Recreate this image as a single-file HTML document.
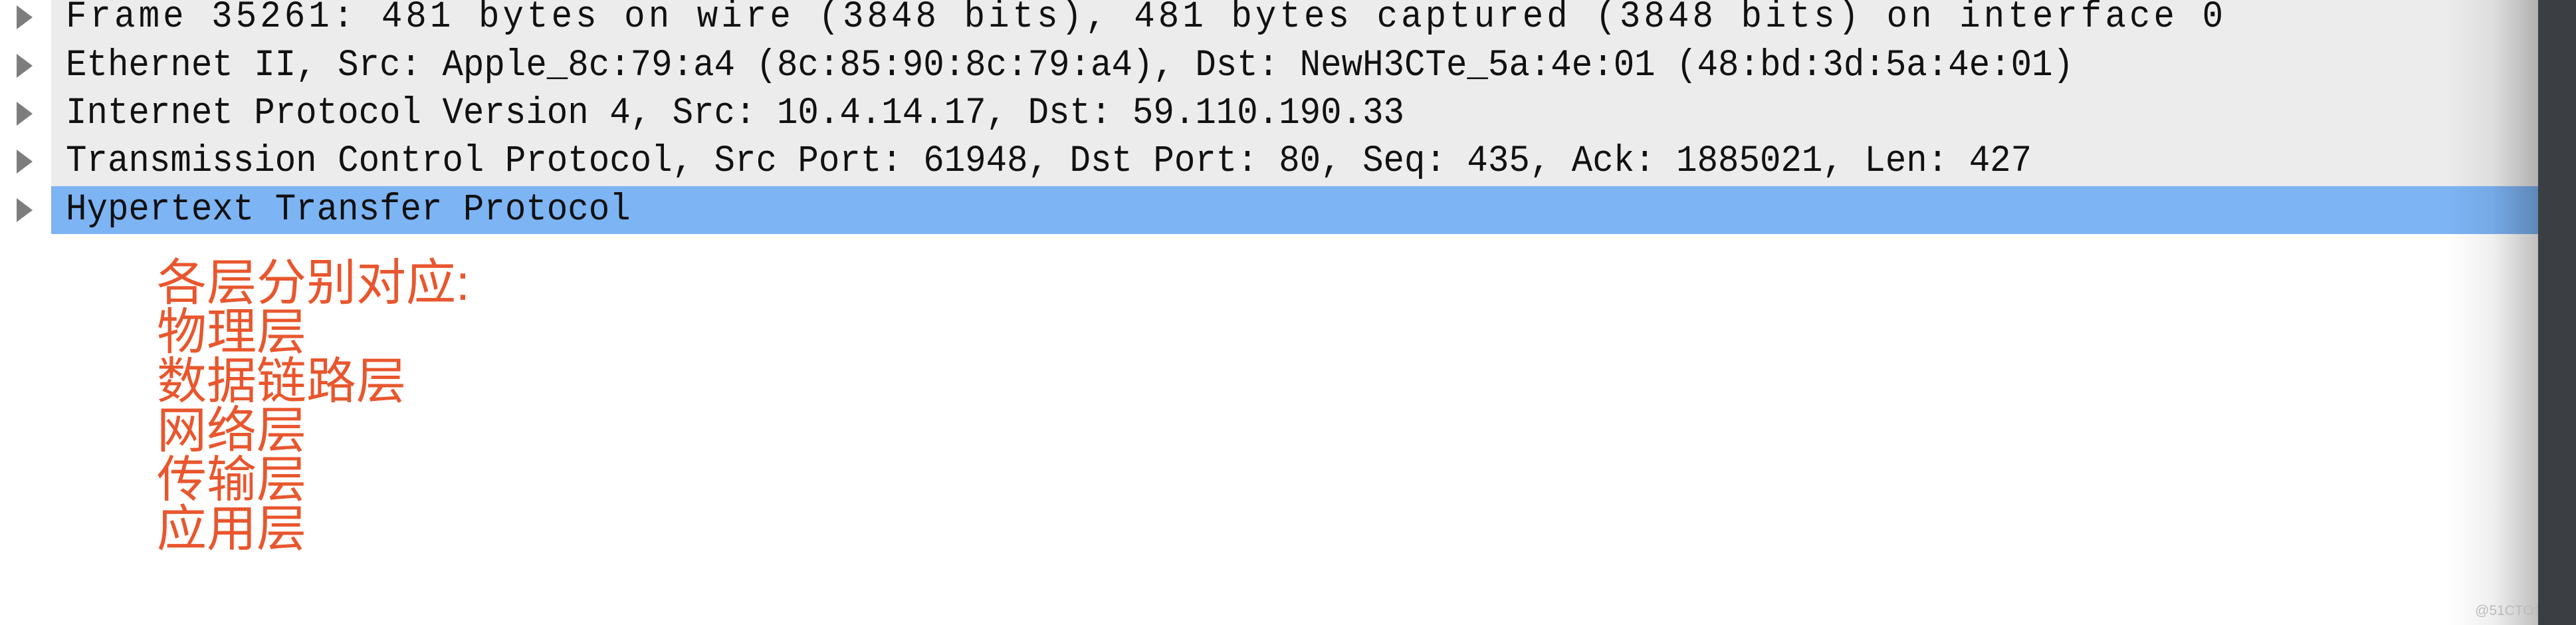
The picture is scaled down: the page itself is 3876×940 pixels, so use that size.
<!DOCTYPE html>
<html><head><meta charset="utf-8"><style>
html,body{margin:0;padding:0;}
body{width:3876px;height:940px;position:relative;overflow:hidden;background:#fff;}
.grey{position:absolute;left:77px;top:0;width:3742px;height:280px;background:#ececec;}
.blue{position:absolute;left:77px;top:280px;width:3742px;height:72px;background:#7db4f4;}
.row{position:absolute;left:99px;height:72px;line-height:72px;font-family:"Liberation Mono",monospace;font-size:57px;color:#111;white-space:pre;transform:scaleX(0.92);transform-origin:0 0;}
.tri{position:absolute;left:25px;width:0;height:0;border-top:18px solid transparent;border-bottom:18px solid transparent;border-left:24px solid #7d7d7d;}
.fade{position:absolute;left:3680px;top:0;width:139px;height:940px;background:linear-gradient(to right,rgba(0,0,0,0),rgba(0,0,0,0.06) 50%,rgba(0,0,0,0.25));}
.dark{position:absolute;left:3819px;top:0;width:57px;height:940px;background:#3b3e43;}
.cn{position:absolute;left:236px;top:388px;font-family:"Liberation Sans","Noto Sans CJK SC",sans-serif;font-size:75px;line-height:74px;color:#e9562d;}
.wm{position:absolute;left:3724px;top:902px;font-family:"Liberation Sans","Noto Sans CJK SC",sans-serif;font-size:21px;color:#bbb;}
</style></head><body>
<div class="grey"></div>
<div class="blue"></div>
<div class="tri" style="top:8px"></div>
<div class="tri" style="top:81px"></div>
<div class="tri" style="top:153px"></div>
<div class="tri" style="top:225px"></div>
<div class="tri" style="top:298px"></div>
<div class="row" style="top:-10px;letter-spacing:5.5px">Frame 35261: 481 bytes on wire (3848 bits), 481 bytes captured (3848 bits) on interface 0</div>
<div class="row" style="top:63px">Ethernet II, Src: Apple_8c:79:a4 (8c:85:90:8c:79:a4), Dst: NewH3CTe_5a:4e:01 (48:bd:3d:5a:4e:01)</div>
<div class="row" style="top:135px">Internet Protocol Version 4, Src: 10.4.14.17, Dst: 59.110.190.33</div>
<div class="row" style="top:207px">Transmission Control Protocol, Src Port: 61948, Dst Port: 80, Seq: 435, Ack: 1885021, Len: 427</div>
<div class="row" style="top:280px">Hypertext Transfer Protocol</div>
<div class="cn">各层分别对应:<br>物理层<br>数据链路层<br>网络层<br>传输层<br>应用层</div>
<div class="fade"></div>
<div class="wm">@51CTO博客</div>
<div class="dark"></div>
</body></html>
